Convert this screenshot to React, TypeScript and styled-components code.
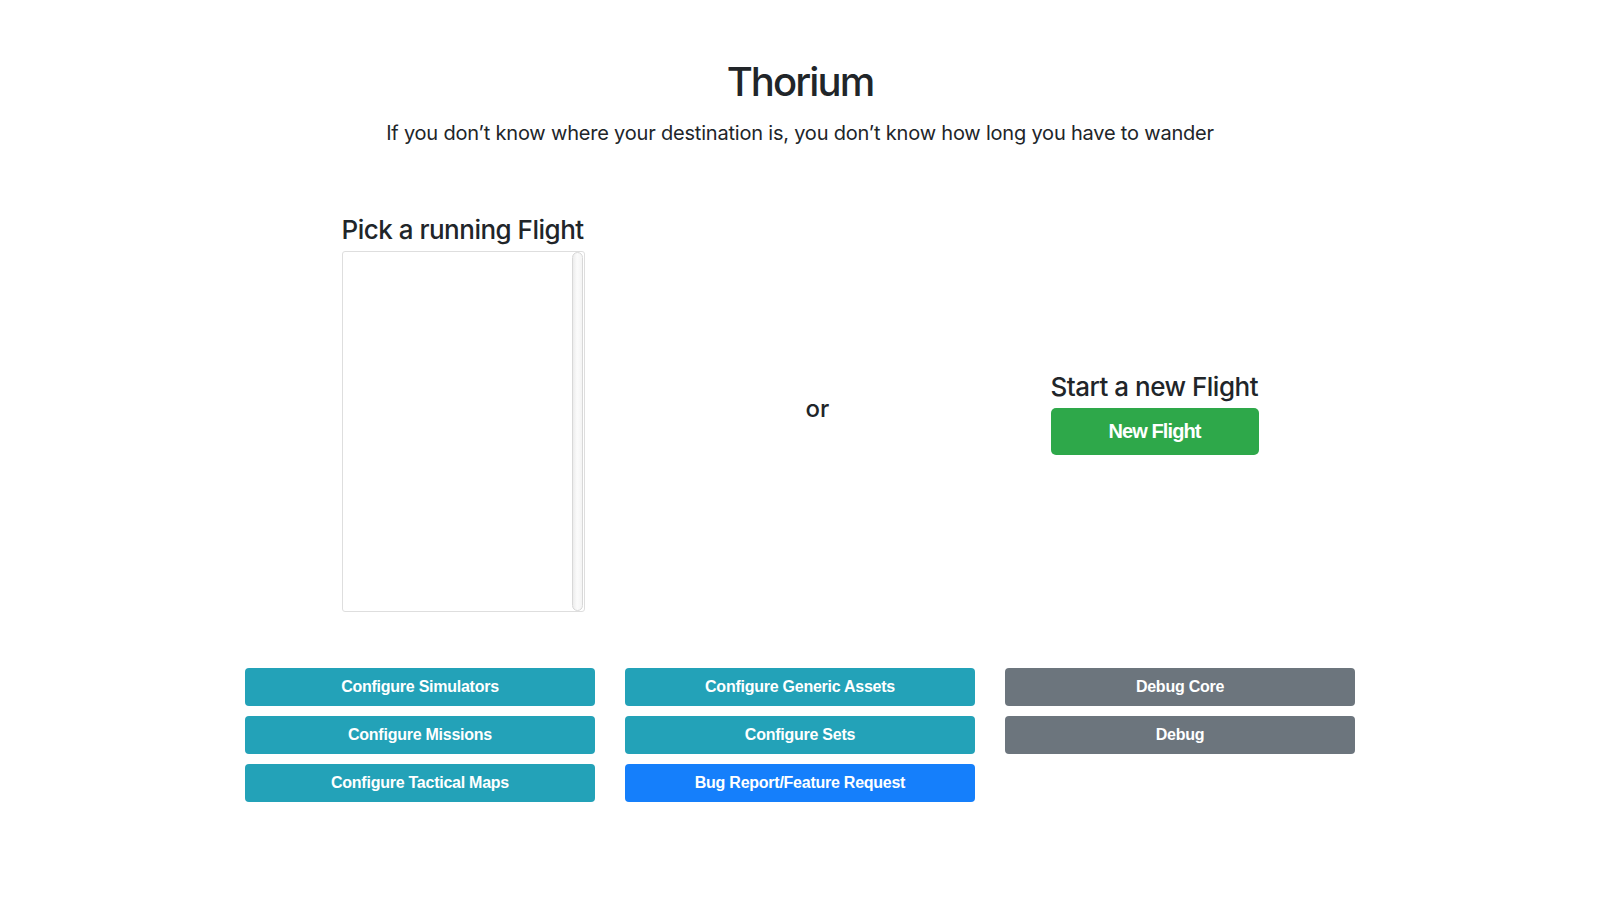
import React from "react";
import styled, { createGlobalStyle } from "styled-components";

const GlobalStyle = createGlobalStyle`
  html, body {
    margin: 0;
    padding: 0;
    background: #ffffff;
    color: #212529;
    font-family: Inter, "Noto Sans", sans-serif;
  }
  * { box-sizing: border-box; }
`;

const Page = styled.div`
  width: 1140px;
  margin: 0 auto;
  padding: 58px 15px 0;
  display: flex;
  flex-direction: column;
  align-items: center;
`;

const Title = styled.h1`
  margin: 0 0 15px;
  font-size: 40px;
  line-height: 48px;
  font-weight: 500;
  letter-spacing: -1.9px;
`;

const Quote = styled.h5`
  margin: 0 0 68px;
  font-size: 20px;
  line-height: 24px;
  font-weight: 400;
  letter-spacing: -0.2px;
`;

const Choice = styled.div`
  width: 917px;
  display: flex;
  justify-content: space-between;
  align-items: center;
`;

const Column = styled.div<{ $w: number }>`
  width: ${(p) => p.$w}px;
  display: flex;
  flex-direction: column;
  align-items: stretch;
`;

const SubHeading = styled.h3`
  margin: 0 0 5px;
  font-size: 26px;
  line-height: 33px;
  font-weight: 500;
  letter-spacing: -0.5px;
  white-space: nowrap;
`;

const FlightList = styled.div`
  height: 361px;
  border: 1px solid #dedede;
  border-radius: 3px;
  display: flex;
  padding-right: 1px;
  background: #fff;
`;

const ListBody = styled.div`
  flex: 1;
`;

const Track = styled.div`
  width: 11px;
  border: 1px solid #d8d8d8;
  border-radius: 6px;
  background: linear-gradient(to right, #ececec, #fbfbfb 45%, #f4f4f4);
`;

const Or = styled.h4`
  margin: 0 0 8px;
  font-size: 24px;
  line-height: 29px;
  font-weight: 500;
`;

const Btn = styled.button<{ $variant: "info" | "secondary" | "primary" | "success"; $lg?: boolean }>`
  display: block;
  width: 100%;
  border: 1px solid transparent;
  border-radius: ${(p) => (p.$lg ? "5px" : "4px")};
  height: ${(p) => (p.$lg ? "47px" : "38px")};
  padding: 0 12px;
  font-family: "Liberation Sans", Arial, sans-serif;
  font-weight: 700;
  font-size: ${(p) => (p.$lg ? "20px" : "16px")};
  letter-spacing: ${(p) => (p.$lg ? "-0.9px" : "-0.25px")};
  color: #fff;
  cursor: pointer;
  background: ${(p) =>
    ({
      info: "#23a2b8",
      secondary: "#6c757d",
      primary: "#157ffb",
      success: "#2ea84a",
    })[p.$variant]};
`;

const ToolGrid = styled.div`
  margin-top: 56px;
  width: 1110px;
  display: grid;
  grid-template-columns: repeat(3, 1fr);
  column-gap: 30px;
  align-items: start;
`;

const ToolColumn = styled.div`
  display: flex;
  flex-direction: column;
  gap: 10px;
`;

export default function App() {
  return (
    <>
      <GlobalStyle />
      <Page>
        <Title>Thorium</Title>
        <Quote>If you don’t know where your destination is, you don’t know how long you have to wander</Quote>
        <Choice>
          <Column $w={243}>
            <SubHeading>Pick a running Flight</SubHeading>
            <FlightList>
              <ListBody />
              <Track />
            </FlightList>
          </Column>
          <Or>or</Or>
          <Column $w={208}>
            <SubHeading>Start a new Flight</SubHeading>
            <Btn $variant="success" $lg>New Flight</Btn>
          </Column>
        </Choice>
        <ToolGrid>
          <ToolColumn>
            <Btn $variant="info">Configure Simulators</Btn>
            <Btn $variant="info">Configure Missions</Btn>
            <Btn $variant="info">Configure Tactical Maps</Btn>
          </ToolColumn>
          <ToolColumn>
            <Btn $variant="info">Configure Generic Assets</Btn>
            <Btn $variant="info">Configure Sets</Btn>
            <Btn $variant="primary">Bug Report/Feature Request</Btn>
          </ToolColumn>
          <ToolColumn>
            <Btn $variant="secondary">Debug Core</Btn>
            <Btn $variant="secondary">Debug</Btn>
          </ToolColumn>
        </ToolGrid>
      </Page>
    </>
  );
}
